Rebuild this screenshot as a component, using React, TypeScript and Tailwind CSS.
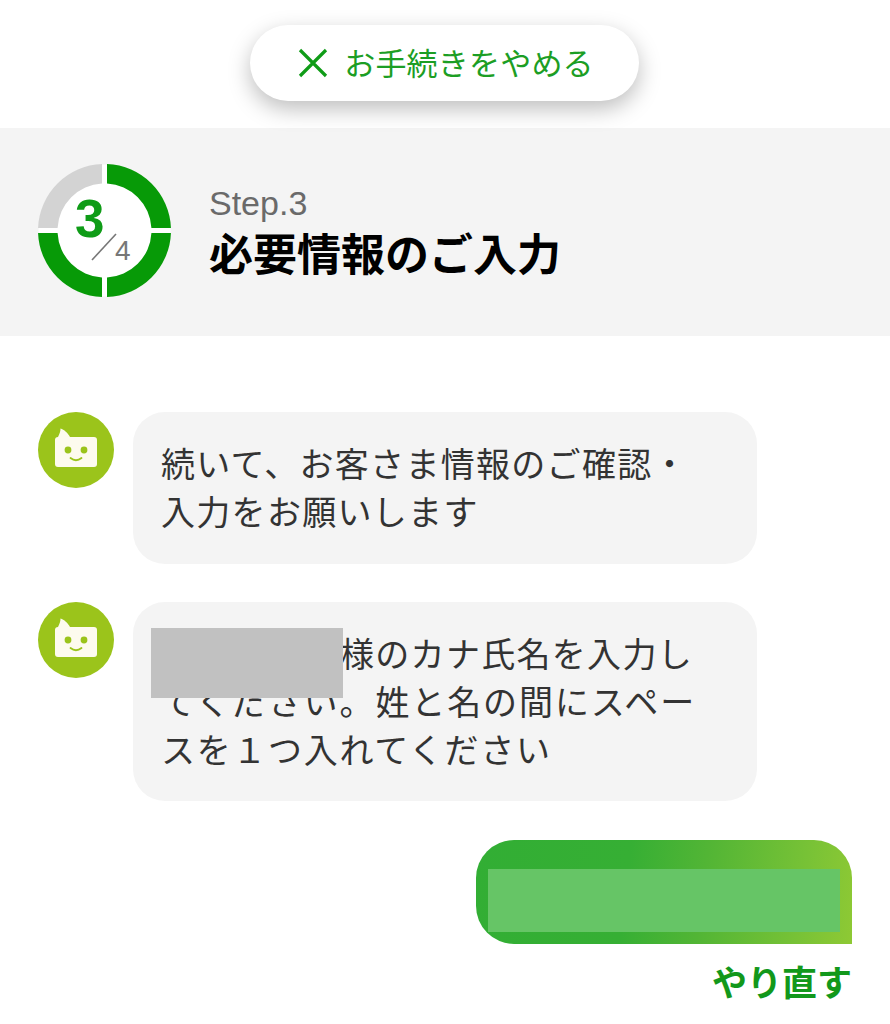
const font = "font-['Liberation_Sans','Noto_Sans_CJK_JP',sans-serif]";

function Ring() {
  return (
    <div className="relative -mt-[3px] h-[133px] w-[133px] shrink-0">
      <svg viewBox="0 0 133 133" className="h-full w-full">
        <circle cx="66.5" cy="66.5" r="66" fill="#ffffff" />
        <path d="M64 0.05A66.5 66.5 0 0 0 0.05 64H19.57A47 47 0 0 1 64 19.57Z" fill="#d3d3d3" />
        <path d="M69 0.05A66.5 66.5 0 0 1 132.95 64H113.43A47 47 0 0 0 69 19.57Z" fill="#079a07" />
        <path d="M132.95 69A66.5 66.5 0 0 1 69 132.95V113.43A47 47 0 0 0 113.43 69Z" fill="#079a07" />
        <path d="M64 132.95A66.5 66.5 0 0 1 0.05 69H19.57A47 47 0 0 0 64 113.43Z" fill="#079a07" />
        <line x1="54" y1="96" x2="78" y2="70" stroke="#777777" strokeWidth="1.6" />
      </svg>
      <span className="absolute left-[37px] top-[26px] text-[53px] leading-[58px] font-bold text-[#0f9c17]">3</span>
      <span className="absolute left-[77px] top-[71px] text-[28px] leading-[32px] text-[#777777]">4</span>
    </div>
  );
}

function Bot() {
  return (
    <svg viewBox="0 0 76 76" className="h-[76px] w-[76px] shrink-0">
      <circle cx="38" cy="38" r="38" fill="#9bc41b" />
      <path d="M20 25C21.5 22 22.5 19.5 22.5 16.5C26 17.5 30 21 32 25H56Q59 25 59 28V52Q59 55 56 55H20Q17 55 17 52V28Q17 25 20 25Z" fill="#fdfbee" />
      <circle cx="30" cy="38" r="3.4" fill="#9bc41b" />
      <circle cx="46" cy="38" r="3.4" fill="#9bc41b" />
      <path d="M32.5 46Q38 50.5 43.5 46" fill="none" stroke="#9bc41b" strokeWidth="1.8" strokeLinecap="round" />
    </svg>
  );
}

export default function App() {
  return (
    <div className={`${font} h-[1024px] w-[890px] overflow-hidden bg-white`}>
      <div className="flex h-[128px] justify-center pt-[25px] pr-[1px]">
        <div className="relative z-10 flex h-[76px] w-[389px] items-center justify-center gap-[16px] rounded-full bg-white pl-[3px] shadow-[0_8px_22px_rgba(0,0,0,0.26)]">
          <svg viewBox="0 0 30 30" className="h-[30px] w-[30px]">
            <path d="M2 2L28 28M28 2L2 28" stroke="#0f9c17" strokeWidth="3.2" fill="none" />
          </svg>
          <span className="pt-[2px] text-[31px] leading-none tracking-[0.2px] text-[#1c9e24]">お手続きをやめる</span>
        </div>
      </div>

      <div className="flex h-[208px] items-center gap-[38px] bg-[#f4f4f4] pl-[38px]">
        <Ring />
        <div className="mt-[2px]">
          <p className="text-[34px] leading-[40px] text-[#6a6a6a]">Step.3</p>
          <h1 className="mt-[5px] text-[44px] leading-[56px] font-bold text-black">必要情報のご入力</h1>
        </div>
      </div>

      <div className="flex flex-col gap-[38px] pt-[76px] pl-[38px]">
        <div className="flex items-start gap-[19px]">
          <Bot />
          <div className="h-[152px] w-[624px] rounded-[32px] bg-[#f4f4f4] px-[28px] pt-[29px] text-[34px] leading-[48px] tracking-[1.3px] text-[#333333]">
            <p>続いて、お客さま情報のご確認・</p>
            <p>入力をお願いします</p>
          </div>
        </div>
        <div className="flex items-start gap-[19px]">
          <Bot />
          <div className="relative h-[199px] w-[624px] rounded-[32px] bg-[#f4f4f4] pl-[28px] pr-[50px] pt-[29px] text-[34px] leading-[48px] text-[#333333]">
            <p className="tracking-[1.3px]">
              <span className="inline-block w-[179px]" />
              様のカナ氏名を入力し
            </p>
            <p className="tracking-[1.9px]">てください。姓と名の間にスペー</p>
            <p className="tracking-[1.7px]">スを１つ入れてください</p>
            <div className="absolute left-[18px] top-[26px] h-[70px] w-[192px] bg-[#c1c1c1]" />
          </div>
        </div>
        <div className="flex flex-col items-end pt-[1px] pr-[38px]">
          <div className="relative h-[104px] w-[376px] rounded-[38px] rounded-br-none bg-[linear-gradient(97deg,#32ae34_0%,#36af34_40%,#52b535_60%,#78c236_86%,#8ec934_100%)]">
            <div className="absolute left-[12px] top-[29px] h-[63px] w-[352px] bg-[#66c566]" />
          </div>
          <p className="mt-[19px] text-[35px] leading-[42px] font-bold text-[#12981b]">やり直す</p>
        </div>
      </div>
    </div>
  );
}
